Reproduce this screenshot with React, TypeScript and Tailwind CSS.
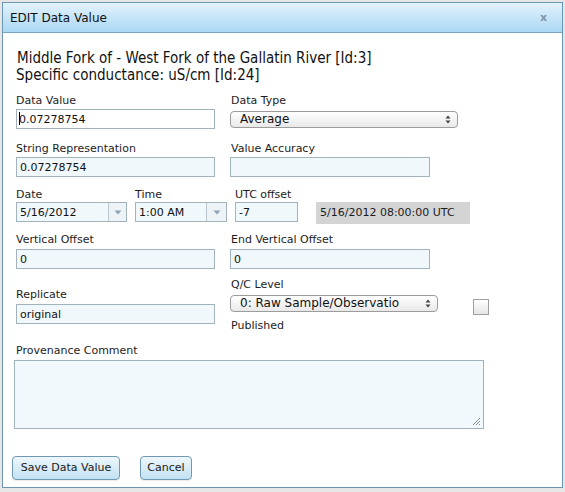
import React from "react";

function Label({ children, className = "" }: { children: React.ReactNode; className?: string }) {
  return <div className={`text-[11px] leading-[14px] text-[#1c1c1c] whitespace-nowrap ${className}`}>{children}</div>;
}

function TextBox({ value, className = "", white = false }: { value?: string; className?: string; white?: boolean }) {
  return (
    <div
      className={`h-[20px] border border-[#a2b3be] ${white ? "bg-white" : "bg-[#f0f8fb]"} text-[11px] leading-[20px] pl-[3px] text-[#111] whitespace-nowrap overflow-hidden ${className}`}
    >
      {white && <span className="inline-block w-px h-[13px] bg-black align-[-2px] -mr-px -ml-px" />}
      {value}
    </div>
  );
}

function MacSelect({ value, className = "" }: { value: string; className?: string }) {
  return (
    <div
      className={`h-[17px] rounded-[4px] border border-[#9c9c9c] bg-linear-to-b from-white to-[#e9e9e9] flex items-center pl-[9px] pr-[6px] text-[12px] leading-[15px] text-[#111] ${className}`}
    >
      <span className="flex-1 whitespace-nowrap overflow-hidden">{value}</span>
      <svg width="6" height="9" viewBox="0 0 6 9">
        <path d="M3 0.5 L5.5 3.5 L0.5 3.5 Z" fill="#444" />
        <path d="M3 8.5 L5.5 5.5 L0.5 5.5 Z" fill="#444" />
      </svg>
    </div>
  );
}

function Combo({ value, className = "", btn = "w-[18px]" }: { value: string; className?: string; btn?: string }) {
  return (
    <div className={`h-[20px] border border-[#a2b3be] bg-[#f0f8fb] flex text-[11px] leading-[20px] text-[#111] ${className}`}>
      <div className="flex-1 pl-[3px] whitespace-nowrap overflow-hidden">{value}</div>
      <div className={`${btn} border-l border-[#b9c6ce] bg-[#edf3f6] flex items-center justify-center`}>
        <svg width="8" height="5" viewBox="0 0 8 5">
          <path d="M0.5 0.5 L7.5 0.5 L4 4.5 Z" fill="#8ca3b1" />
        </svg>
      </div>
    </div>
  );
}

function Button({ children, className = "" }: { children: React.ReactNode; className?: string }) {
  return (
    <div
      className={`h-[24px] rounded-[4px] border border-[#6f99b2] bg-linear-to-b from-[#eef7fc] to-[#c3e1f2] text-center text-[11px] leading-[22px] text-[#1a1a1a] whitespace-nowrap shadow-[0_1px_0_rgba(0,0,0,0.08)] ${className}`}
    >
      {children}
    </div>
  );
}

export default function App() {
  return (
    <div className="w-[565px] h-[492px] bg-[#e6e6e6] pt-[2px] pl-[2px] font-['DejaVu_Sans',Verdana,sans-serif] text-[#1c1c1c] overflow-hidden">
      <div className="w-[561px] h-[486px] border border-[#6a96b0] bg-white flex flex-col">
        {/* header */}
        <div className="h-[30px] shrink-0 border-b border-[#78a6c2] bg-linear-to-b from-[#e3f2fc] to-[#aad8f4] flex items-center justify-between pl-[7px] pr-[15px]">
          <span className="text-[12px] text-[#111]">EDIT Data Value</span>
          <span className="text-[11px] font-bold text-[#7d97a6] leading-none">x</span>
        </div>

        {/* body */}
        <div className="pl-[13px] pt-[17px] flex flex-col">
          <div className="font-['DejaVu_Sans_Condensed','DejaVu_Sans',sans-serif] text-[15px] leading-[17px] text-[#111]">
            <div className="whitespace-nowrap pl-px">Middle Fork of - West Fork of the Gallatin River [Id:3]</div>
            <div className="whitespace-nowrap">Specific conductance: uS/cm [Id:24]</div>
          </div>

          {/* row 1 */}
          <div className="mt-[10px] flex">
            <div className="w-[214px]">
              <Label>Data Value</Label>
              <TextBox white value="0.07278754" className="mt-px w-[199px]" />
            </div>
            <div>
              <Label className="pl-px">Data Type</Label>
              <MacSelect value="Average" className="mt-[3px] w-[228px]" />
            </div>
          </div>

          {/* row 2 */}
          <div className="mt-[13px] flex">
            <div className="w-[214px]">
              <Label>String Representation</Label>
              <TextBox value="0.07278754" className="mt-px w-[199px]" />
            </div>
            <div>
              <Label className="pl-px">Value Accuracy</Label>
              <TextBox value="" className="mt-px w-[200px]" />
            </div>
          </div>

          {/* row 3 */}
          <div className="mt-[11px] flex items-end">
            <div className="w-[119px]">
              <Label>Date</Label>
              <Combo value="5/16/2012" className="w-[111px]" />
            </div>
            <div className="w-[100px]">
              <Label>Time</Label>
              <Combo value="1:00 AM" className="w-[92px]" btn="w-[20px]" />
            </div>
            <div className="w-[81px]">
              <Label>UTC offset</Label>
              <TextBox value="-7" className="w-[63px]" />
            </div>
            <div className="h-[22px] w-[154px] bg-[#d4d4d4] text-[11px] leading-[22px] pl-[4px] text-[#1c1c1c] whitespace-nowrap -mb-[2px]">
              5/16/2012 08:00:00 UTC
            </div>
          </div>

          {/* row 4 */}
          <div className="mt-[11px] flex">
            <div className="w-[214px]">
              <Label>Vertical Offset</Label>
              <TextBox value="0" className="mt-[2px] w-[199px]" />
            </div>
            <div>
              <Label className="pl-px">End Vertical Offset</Label>
              <TextBox value="0" className="mt-[2px] w-[200px]" />
            </div>
          </div>

          {/* row 5 */}
          <div className="flex items-start">
            <div className="w-[214px] pt-[19px]">
              <Label>Replicate</Label>
              <TextBox value="original" className="mt-[2px] w-[199px]" />
            </div>
            <div className="pt-[9px]">
              <Label className="pl-px">Q/C Level</Label>
              <div className="flex items-start mt-[3px]">
                <MacSelect value="0: Raw Sample/Observatio" className="w-[208px]" />
                <div className="ml-[35px] mt-[4px] w-[16px] h-[16px] border border-[#9f9f9f] bg-linear-to-b from-white to-[#e6e6e6]" />
              </div>
              <Label className="pl-px mt-[4px]">Published</Label>
            </div>
          </div>

          {/* row 6 */}
          <div className="mt-[11px]">
            <Label>Provenance Comment</Label>
            <div className="relative mt-[2px] -ml-[2px] w-[470px] h-[69px] border border-[#a2b3be] bg-[#f2f9fc]">
              <svg className="absolute right-[2px] bottom-[2px]" width="10" height="10" viewBox="0 0 10 10">
                <path d="M9 2 L2 9 M9 5 L5 9 M9 8 L8 9" stroke="#8a8a8a" strokeWidth="1" />
              </svg>
            </div>
          </div>

          {/* buttons */}
          <div className="mt-[27px] -ml-[4px] flex gap-[20px]">
            <Button className="w-[108px]">Save Data Value</Button>
            <Button className="w-[52px]">Cancel</Button>
          </div>
        </div>
      </div>
    </div>
  );
}
